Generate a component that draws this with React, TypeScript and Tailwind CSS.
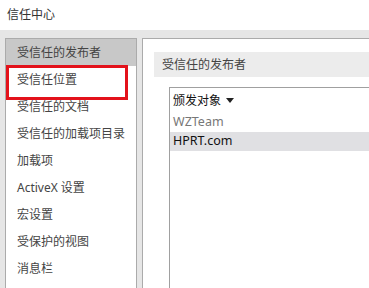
import React from "react";

const items = [
  "受信任的发布者",
  "受信任位置",
  "受信任的文档",
  "受信任的加载项目录",
  "加载项",
  "ActiveX 设置",
  "宏设置",
  "受保护的视图",
  "消息栏",
];

export default function App() {
  return (
    <div
      className="w-[369px] h-[288px] overflow-hidden bg-[#e6e6e6] flex flex-col"
      style={{ fontFamily: '"Noto Sans", "Noto Sans CJK SC", sans-serif' }}
    >
      <div className="h-[30px] shrink-0 bg-white flex items-center pl-[7px] text-[12px] text-[#333]">
        信任中心
      </div>
      <div className="flex flex-1 pt-[8px] pl-[5px] gap-[5px] min-h-0">
        <div className="relative w-[132px] shrink-0 bg-white border border-[#ababab] border-b-0">
          {items.map((t, i) => (
            <div
              key={t}
              className={
                "h-[27px] flex items-center pl-[11px] text-[12px] text-[#444] " +
                (i === 0 ? "bg-[#c8c8c8]" : "")
              }
            >
              {t}
            </div>
          ))}
          <div className="absolute left-0 top-[26px] w-[122px] h-[35px] border-[3px] border-[#e3121b]" />
        </div>
        <div className="flex-1 bg-white border border-[#ababab] border-r-0 border-b-0 pt-[13px] pl-[11px] min-w-0">
          <div className="h-[25px] bg-[#ececec] flex items-center pl-[8px] text-[12px] text-[#444]">
            受信任的发布者
          </div>
          <div className="mt-[10px] ml-[15px] border border-[#a0a0a0] border-r-0 h-[300px]">
            <div className="h-[25px] flex items-center pl-[3px] text-[12px] text-[#111] gap-[5px]">
              <span>颁发对象</span>
              <svg width="8" height="5" viewBox="0 0 8 5">
                <path d="M0 0 L8 0 L4 5 Z" fill="#222" />
              </svg>
            </div>
            <div className="h-[19px] flex items-center pl-[3px] text-[12.5px] text-[#777]">
              WZTeam
            </div>
            <div className="h-[19px] flex items-center pl-[3px] text-[12.5px] text-[#111] bg-[#e0e0e3]">
              HPRT.com
            </div>
          </div>
        </div>
      </div>
    </div>
  );
}
